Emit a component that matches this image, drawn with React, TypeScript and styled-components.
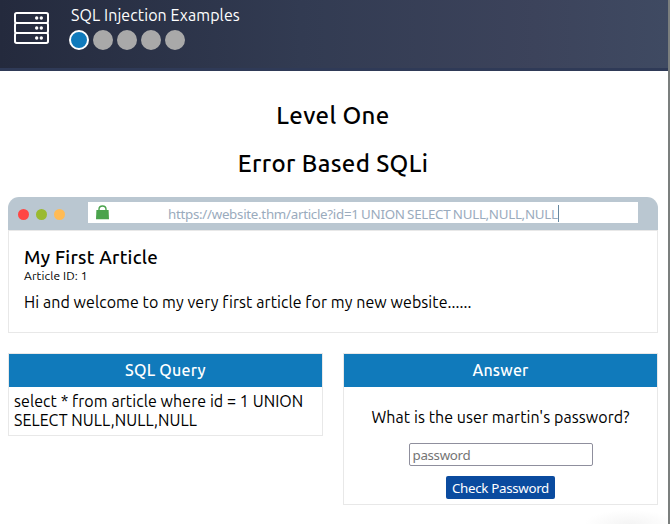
import React from "react";
import styled, { createGlobalStyle } from "styled-components";

const GlobalStyle = createGlobalStyle`
  * { box-sizing: border-box; }
  body {
    margin: 0;
    background: #fff;
    color: #000;
    font-family: Ubuntu, "Noto Sans", sans-serif;
    overflow: hidden;
  }
  h1, h2, p { margin: 0; }
`;

const Page = styled.div`
  width: 670px;
  height: 524px;
  border-right: 2px solid #7b7f7e;
  background: radial-gradient(ellipse 46px 14px at 630px 524px, #f4f4f4, #fff);
`;

const Header = styled.header`
  display: flex;
  height: 71px;
  padding: 4px 14px 0;
  border-bottom: 3px solid #2f3a57;
  background: linear-gradient(90deg, #242a3d 0%, #323b52 45%, #3c435b 80%, #3f4a62 100%);
`;

const ServerIcon = styled.svg`
  width: 36px;
  height: 33px;
  margin-top: 8px;
`;

const HeaderInfo = styled.div`
  margin-left: 19px;
`;

const Title = styled.div`
  height: 22px;
  padding-left: 2px;
  line-height: 22px;
  font-size: 16px;
  letter-spacing: 0.09px;
  color: #fff;
  white-space: nowrap;
`;

const Steps = styled.div`
  display: flex;
  gap: 4px;
  margin-top: 4px;
`;

const Step = styled.span<{ $active?: boolean }>`
  width: 20px;
  height: 20px;
  border-radius: 50%;
  border: 2px solid ${(p) => (p.$active ? "#fff" : "#a9a9a9")};
  background: ${(p) => (p.$active ? "#107abb" : "#a9a9a9")};
`;

const Main = styled.main`
  padding: 31px 10px 0 8px;
`;

const Heading = styled.h1`
  height: 28px;
  margin-bottom: 20px;
  line-height: 28px;
  font-size: 24px;
  font-weight: 500;
  letter-spacing: 0.36px;
  text-align: center;
`;

const Browser = styled.section`
  height: 136px;
  margin-top: -1px;
`;

const BrowserBar = styled.div`
  display: flex;
  height: 33px;
  padding: 5px 20px 0 10px;
  border-radius: 11px 11px 0 0;
  background: #bac7d1;
`;

const Lights = styled.div`
  display: flex;
  gap: 7px;
  width: 70px;
  padding-top: 7px;
`;

const Light = styled.span<{ $color: string }>`
  width: 11px;
  height: 11px;
  border-radius: 50%;
  background: ${(p) => p.$color};
`;

const Address = styled.div`
  display: flex;
  width: 550px;
  height: 21px;
  padding-left: 8px;
  background: #fff;
`;

const LockIcon = styled.svg`
  width: 13px;
  height: 15px;
  margin-top: 3px;
`;

const Url = styled.span`
  height: 17px;
  margin: 3px 0 0 59px;
  line-height: 18px;
  font-family: "Noto Sans", sans-serif;
  font-size: 13.33px;
  letter-spacing: -0.28px;
  word-spacing: -0.7px;
  color: #9aabbd;
  white-space: nowrap;
  border-right: 1px solid #6688a0;
`;

const Article = styled.article`
  height: 103px;
  padding: 15px 15px 0;
  border: 1px solid #e8e8e8;
`;

const ArticleTitle = styled.h2`
  height: 23px;
  line-height: 24px;
  font-size: 18.72px;
  font-weight: 500;
  letter-spacing: 0.25px;
`;

const ArticleId = styled.div`
  height: 14px;
  line-height: 14px;
  font-size: 12px;
  letter-spacing: 0.12px;
`;

const Body = styled.p`
  line-height: 19px;
  font-size: 16px;
  letter-spacing: 0.07px;
`;

const ArticleBody = styled(Body)`
  margin-top: 10px;
`;

const Columns = styled.div`
  display: flex;
  align-items: flex-start;
  gap: 20px;
  margin-top: 20px;
`;

const Panel = styled.section<{ $height: number }>`
  width: 315px;
  height: ${(p) => p.$height}px;
  border: 1px solid #e8e8e8;
`;

const PanelTitle = styled.h2`
  height: 33px;
  line-height: 33px;
  background: #107abb;
  color: #fff;
  font-size: 16px;
  font-weight: 500;
  letter-spacing: 0.22px;
  text-align: center;
`;

const Query = styled.div`
  padding: 5px;
`;

const Form = styled.form`
  display: flex;
  flex-direction: column;
  align-items: center;
  padding-top: 21px;
`;

const PasswordInput = styled.input`
  width: 184px;
  height: 23px;
  margin-top: 16px;
  padding: 2px 3px;
  border: 1px solid #8f8f9d;
  border-radius: 2px;
  font: 13.33px "Noto Sans", sans-serif;
  letter-spacing: -0.32px;
  &::placeholder { color: #757575; opacity: 1; }
`;

const SubmitButton = styled.button`
  width: 109px;
  height: 23px;
  margin-top: 10px;
  padding: 1px 0 0;
  border: 0;
  border-radius: 2px;
  background: #0a4b9f;
  color: #fff;
  font: 13.33px "Noto Sans", sans-serif;
  letter-spacing: -0.32px;
  white-space: nowrap;
`;

export default function App() {
  return (
    <>
      <GlobalStyle />
      <Page>
        <Header>
          <ServerIcon viewBox="0 0 36 33" fill="none" stroke="#fff" strokeWidth="2">
            {[1, 11, 21].map((y) => (
              <g key={y}>
                <rect x="1" y={y} width="33" height="10" rx="1.7" />
                <circle cx="22.7" cy={y + 5} r="1.7" fill="#fff" stroke="none" />
                <circle cx="27.3" cy={y + 5} r="1.7" fill="#fff" stroke="none" />
              </g>
            ))}
          </ServerIcon>
          <HeaderInfo>
            <Title>SQL Injection Examples</Title>
            <Steps>
              <Step $active />
              <Step />
              <Step />
              <Step />
              <Step />
            </Steps>
          </HeaderInfo>
        </Header>
        <Main>
          <Heading>Level One</Heading>
          <Heading>Error Based SQLi</Heading>
          <Browser>
            <BrowserBar>
              <Lights>
                <Light $color="#ff4644" />
                <Light $color="#9aba2f" />
                <Light $color="#ffbb55" />
              </Lights>
              <Address>
                <LockIcon viewBox="0 0 13 15">
                  <path d="M3 6V4.2a3.5 3.2 0 0 1 7 0V6" fill="none" stroke="#4aa34c" strokeWidth="1.4" />
                  <path d="M.4 5h12.2l.4 9.3H0z" fill="#4aa34c" />
                </LockIcon>
                <Url>https://website.thm/article?id=1 UNION SELECT NULL,NULL,NULL</Url>
              </Address>
            </BrowserBar>
            <Article>
              <ArticleTitle>My First Article</ArticleTitle>
              <ArticleId>Article ID: 1</ArticleId>
              <ArticleBody>Hi and welcome to my very first article for my new website......</ArticleBody>
            </Article>
          </Browser>
          <Columns>
            <Panel $height={83}>
              <PanelTitle>SQL Query</PanelTitle>
              <Query>
                <Body>select * from article where id = 1 UNION SELECT NULL,NULL,NULL</Body>
              </Query>
            </Panel>
            <Panel $height={152}>
              <PanelTitle>Answer</PanelTitle>
              <Form>
                <Body>What is the user martin's password?</Body>
                <PasswordInput type="text" placeholder="password" />
                <SubmitButton type="button">Check Password</SubmitButton>
              </Form>
            </Panel>
          </Columns>
        </Main>
      </Page>
    </>
  );
}
